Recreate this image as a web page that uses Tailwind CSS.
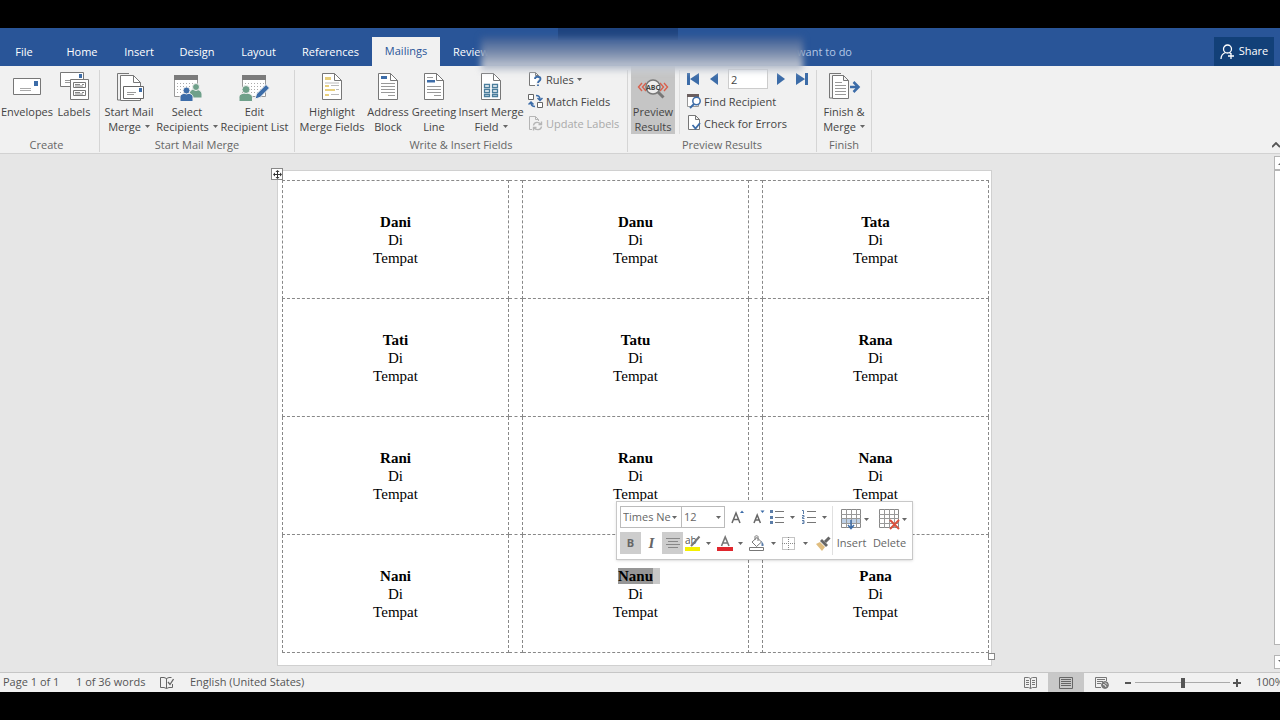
<!DOCTYPE html>
<html lang="en">
<head>
  <meta charset="UTF-8" />
  <meta name="viewport" content="width=device-width, initial-scale=1.0" />
  <title>Labels - Word</title>
  <script src="https://cdn.jsdelivr.net/npm/@tailwindcss/browser@4"></script>
</head>
<body class="bg-black font-['Open_Sans','Noto_Sans',sans-serif] text-[11px] text-[#444]">
  <!-- shared icon shapes -->
  <svg class="hidden">
    <symbol id="page" viewBox="0 0 20 27">
      <path d="M.5.5h12l7 7v19H.5z" fill="#fff" stroke="#777" />
      <path d="M12.5.5v7h7" fill="none" stroke="#777" />
    </symbol>
    <symbol id="sheet" viewBox="0 0 24 22">
      <path d="M.5.5h23v21H.5z" fill="#fff" stroke="#999" />
      <path d="M0 0h24v5H0z" fill="#7b7b7b" />
      <path d="M3 8.500h19M3 11.500h19M3 14.500h19M3 17.500h19" stroke="#aaa" stroke-dasharray="1 2" />
    </symbol>
    <symbol id="caret" viewBox="0 0 5 3"><path d="M0 0h5L2.500 3z" fill="#666" /></symbol>
  </svg>

  <div class="min-h-screen flex flex-col pt-7 pb-[29px] overflow-hidden">
    <!-- tabs -->
    <header class="relative bg-[#295598] h-[38px] flex items-end text-white whitespace-nowrap">
      <nav class="flex items-end text-center leading-[28px]">
        <a href="#" class="w-12 mr-1">File</a>
        <a href="#" class="w-[60px]">Home</a>
        <a href="#" class="w-[54px]">Insert</a>
        <a href="#" class="w-[62px]">Design</a>
        <a href="#" class="w-[61px]">Layout</a>
        <a href="#" class="w-[83px]">References</a>
        <a href="#" class="w-[68px] h-[29px] bg-[#f1f1f1] text-[#295598]">Mailings</a>
        <a href="#" class="w-[62px]">Review</a>
      </nav>
      <input type="text" value="Tell me what you want to do" aria-label="Tell me" class="w-[160px] h-[29px] ml-[190px] mr-auto text-right text-[#b4c8e6] outline-none" />
      <button class="bg-[#124078] h-[29px] w-[60px] mr-1.5 flex items-center justify-center gap-1">
        <svg class="w-[15px] h-4" viewBox="0 0 15 16" fill="none" stroke="#fff" stroke-width="1.3">
          <circle cx="7.500" cy="5" r="4" />
          <path d="M1 15c0-3 2-5.500 4.500-6.500M9.500 8.500l1.500 1.500M8 12h6M11 9v6" />
        </svg>
        Share
      </button>
      <div class="absolute left-[558px] top-0 w-[120px] h-3 bg-[#1f447f]"></div>
      <div class="absolute left-[481px] top-[9px] w-[322px] h-[34px] z-10 bg-linear-to-b from-[#3a5c95] via-[#7f90ae] to-[#d3d6dc] blur-[3px]"></div>
    </header>

    <!-- ribbon -->
    <div class="relative bg-[#f1f1f1] h-[88px] border-b border-[#d2d2d2] flex pt-1 pb-px whitespace-nowrap leading-[15px]">
      <section class="w-[100px] shrink-0 border-r border-[#d5d5d5] flex flex-col justify-between">
        <div class="flex">
          <button class="w-[54px] flex flex-col items-center">
            <svg class="w-9 h-[34px]" viewBox="0 0 36 34">
              <path d="M4.500 8.500h27v16h-27z" fill="#fff" stroke="#777" />
              <path d="M25 11h4v5h-4z" fill="#3c6ca8" />
              <path d="M11 18.500h11M11 20.500h11" stroke="#aaa" />
            </svg>
            Envelopes
          </button>
          <button class="w-10 flex flex-col items-center">
            <svg class="w-9 h-[34px]" viewBox="0 0 36 34">
              <path d="M4.500 2.500h23v14h-23z" fill="#fff" stroke="#777" />
              <path d="M23 4h3v4h-3z" fill="#3c6ca8" />
              <path d="M9 10.500h5M9 12.500h5" stroke="#999" />
              <path d="M14.500 9.500h18v20h-18z" fill="#fff" stroke="#777" />
              <path d="M17.500 12.500h12v5h-12zM17.500 20.500h12v5h-12z" fill="#fff" stroke="#777" />
              <path d="M19 14.500h5M26 14.500h2M19 16h8M19 22.500h5M26 22.500h2M19 24h8" stroke="#888" />
            </svg>
            Labels
          </button>
        </div>
        <h2 class="text-center text-[#666] pr-1.5">Create</h2>
      </section>

      <section class="w-[195px] shrink-0 border-r border-[#d5d5d5] flex flex-col justify-between">
        <div class="flex pl-[3px]">
          <button class="w-[52px] flex flex-col items-center">
            <svg class="w-9 h-[34px]" viewBox="0 0 36 34">
              <path d="M18 3.500H6.500V30H9" fill="none" stroke="#777" />
              <path d="M9.500 5.500h13l7 7v18h-20z" fill="#fff" stroke="#777" />
              <path d="M22.500 5.500v7h7" fill="none" stroke="#777" />
              <path d="M12.500 16.500h20v12h-20z" fill="#fff" stroke="#666" />
              <path d="M28 18h3v4h-3z" fill="#3c6ca8" />
              <path d="M16 22.500h9M16 24.500h7" stroke="#999" />
            </svg>
            Start Mail
            <span class="flex items-center gap-1">Merge <svg class="w-[5px] h-[3px]"><use href="#caret" /></svg></span>
          </button>
          <button class="w-16 flex flex-col items-center">
            <svg class="w-9 h-[34px]" viewBox="0 0 36 34">
              <use href="#sheet" x="5" y="5" width="24" height="22" />
              <g stroke="#f1f1f1">
                <path d="M20 28v-4c0-3 3-5 6-5s7 2 7 5v4z" fill="#6fa08a" />
                <circle cx="27" cy="17" r="3.500" fill="#6fa08a" />
                <path d="M11 31.500v-4c0-3 3-4.500 6.500-4.500s6.500 1.500 6.500 4.500v4z" fill="#3c6ca8" />
                <circle cx="17.500" cy="20.500" r="3.500" fill="#3c6ca8" />
              </g>
            </svg>
            Select
            <span class="flex items-center gap-1">Recipients <svg class="w-[5px] h-[3px]"><use href="#caret" /></svg></span>
          </button>
          <button class="w-[71px] flex flex-col items-center">
            <svg class="w-9 h-[34px]" viewBox="0 0 36 34">
              <use href="#sheet" x="5" y="5" width="24" height="22" />
              <g stroke="#f1f1f1">
                <path d="M2 31.500v-4c0-3 3-4.500 6.500-4.500s7 1.500 7 4.500v4z" fill="#6fa08a" />
                <circle cx="9" cy="19.500" r="4" fill="#6fa08a" />
                <path d="M18 29l1.500-5L29 14.500l3.500 3.500-9.500 9.500z" fill="#3c6ca8" />
              </g>
            </svg>
            Edit
            <span>Recipient List</span>
          </button>
        </div>
        <h2 class="text-center text-[#666]">Start Mail Merge</h2>
      </section>

      <section class="w-[333px] shrink-0 border-r border-[#d5d5d5] flex flex-col justify-between">
        <div class="flex pl-[3px]">
          <button class="w-[68px] flex flex-col items-center">
            <svg class="w-9 h-[34px]" viewBox="0 0 36 34">
              <use href="#page" x="8" y="3" width="20" height="27" />
              <path d="M11 7h6v3h-6zM11 15h4v2h-4zM11 19h10v2H11zM11 24h4v2h-4z" fill="#e8cf7c" />
              <path d="M17 15.500h8M22 19.500h3M17 24.500h8M11 13h14" stroke="#bbb" />
            </svg>
            Highlight
            <span>Merge Fields</span>
          </button>
          <button class="w-11 flex flex-col items-center">
            <svg class="w-9 h-[34px]" viewBox="0 0 36 34">
              <use href="#page" x="8" y="3" width="20" height="27" />
              <path d="M11 6h6v3h-6z" fill="#3c6ca8" />
              <path d="M11 13.500h14M11 16.500h14M11 19.500h14M11 22.500h14M18 25.500h7" stroke="#999" />
            </svg>
            Address
            <span>Block</span>
          </button>
          <button class="w-12 flex flex-col items-center">
            <svg class="w-9 h-[34px]" viewBox="0 0 36 34">
              <use href="#page" x="8" y="3" width="20" height="27" />
              <path d="M11 10h8v2.500h-8z" fill="#3c6ca8" />
              <path d="M11 7.500h6M11 16.500h14M11 19.500h14M11 22.500h14M18 25.500h7" stroke="#999" />
            </svg>
            Greeting
            <span>Line</span>
          </button>
          <button class="w-[66px] flex flex-col items-center">
            <svg class="w-9 h-[34px]" viewBox="0 0 36 34">
              <use href="#page" x="8" y="3" width="20" height="27" />
              <path d="M11.500 14.500h5v3h-5zM19.500 14.500h5v3h-5zM11.500 19.500h5v3h-5zM19.500 19.500h5v3h-5zM11.500 24.500h5v2h-5zM19.500 24.500h5v2h-5z" fill="#fff" stroke="#4a7d9c" stroke-width="1.300" />
            </svg>
            Insert Merge
            <span class="flex items-center gap-1">Field <svg class="w-[5px] h-[3px]"><use href="#caret" /></svg></span>
          </button>
          <div class="flex flex-col pl-1 -mt-0.5">
            <button class="h-[22px] flex items-center gap-[3px]">
              <svg class="w-[15px] h-4" viewBox="0 0 15 16">
                <path d="M7 14.500H1.500v-13h6l3 3V7M7.500 1.500v3h3" fill="#fff" stroke="#777" />
                <path d="M7 8c0-3 5.500-3 5.500 0 0 2-2.500 2-2.500 4M10 13.500V15" fill="none" stroke="#3c6ca8" stroke-width="1.800" />
              </svg>
              Rules <svg class="w-[5px] h-[3px]"><use href="#caret" /></svg>
            </button>
            <button class="h-[22px] flex items-center gap-[3px]">
              <svg class="w-[15px] h-4" viewBox="0 0 15 16">
                <path d="M.5 1.500h5v5h-5zM9.500 9.500h5v5h-5z" fill="#fff" stroke="#666" />
                <path d="M8 2.500c3 0 4 1.500 4 4M9.500 5L12 7.500 14.500 5M7 13.500c-3 0-4-1.500-4-4M.5 11.500L3 9l2.500 2.500" fill="none" stroke="#3c6ca8" stroke-width="1.500" />
              </svg>
              Match Fields
            </button>
            <button class="h-[22px] flex items-center gap-[3px] text-[#aaa]">
              <svg class="w-[15px] h-4" viewBox="0 0 15 16" fill="none" stroke="#b5b5b5">
                <path d="M4 14.500H1.500v-13h6l3 3V6M7.500 1.500v3h3" />
                <path d="M5.500 10.500c.5-4 6-4 7.500-1M13.500 6.500v3h-3M13.500 11.500c-.5 4-6 4-7.500 1M5.500 15.500v-3h3" stroke-width="1.400" />
              </svg>
              Update Labels
            </button>
          </div>
        </div>
        <h2 class="text-center text-[#666]">Write &amp; Insert Fields</h2>
      </section>

      <section class="w-[189px] shrink-0 border-r border-[#d5d5d5] flex flex-col justify-between">
        <div class="flex pl-[3px]">
          <button class="w-11 h-[68px] -mt-1 pt-1 bg-[#c5c5c5] flex flex-col items-center">
            <svg class="w-9 h-[34px]" viewBox="0 0 36 34">
              <path d="M7 13l-3.500 4L7 21M11 13l-3.500 4 3.500 4M25 13l3.500 4-3.500 4M29 13l3.500 4-3.500 4" fill="none" stroke="#d9604c" stroke-width="1.400" />
              <path d="M22.500 21.500l6 6" stroke="#777" stroke-width="3" />
              <circle cx="18" cy="17" r="7" fill="#eee" stroke="#777" stroke-width="1.500" />
              <text x="18" y="20" text-anchor="middle" font-size="7" font-weight="700" fill="#444">ABC</text>
            </svg>
            Preview
            <span>Results</span>
          </button>
          <div class="w-px bg-[#dedede] ml-1 mr-[6px]"></div>
          <div class="flex flex-col -mt-0.5">
            <div class="h-[22px] flex items-center text-[#3c6ca8]">
              <button aria-label="First"><svg class="w-[14px] h-3" viewBox="0 0 14 12" fill="currentColor"><path d="M1 0h3v12H1zM13 0v12L4 6z" /></svg></button>
              <button aria-label="Previous" class="ml-2.5"><svg class="w-2 h-3" viewBox="0 0 8 12" fill="currentColor"><path d="M8 0v12L0 6z" /></svg></button>
              <input type="text" value="2" aria-label="Record" class="w-10 h-5 ml-[10px] px-0.5 bg-white border border-[#ccc] text-[#444] outline-none" />
              <button aria-label="Next" class="ml-[9px]"><svg class="w-2 h-3" viewBox="0 0 8 12" fill="currentColor"><path d="M0 0v12l8-6z" /></svg></button>
              <button aria-label="Last" class="ml-[10px]"><svg class="w-[14px] h-3" viewBox="0 0 14 12" fill="currentColor"><path d="M1 0v12l9-6zM10 0h3v12h-3z" /></svg></button>
            </div>
            <button class="h-[22px] flex items-center gap-0.5">
              <svg class="w-4 h-4" viewBox="0 0 16 16">
                <path d="M1.500 1.500h11v12h-11z" fill="#fff" stroke="#999" />
                <path d="M1 1h12v3H1z" fill="#6b5f5f" />
                <circle cx="10.500" cy="8" r="3.700" fill="#fff" stroke="#3c6ca8" stroke-width="1.500" />
                <path d="M8 11l-4 4" stroke="#3c6ca8" stroke-width="2" />
              </svg>
              Find Recipient
            </button>
            <button class="h-[22px] flex items-center gap-0.5">
              <svg class="w-4 h-4" viewBox="0 0 16 16" fill="none">
                <path d="M2.500.5h7l4 4v10h-11zM9.500.5v4h4" fill="#fff" stroke="#777" />
                <path d="M6.500 10l3 3.500L14 8" stroke="#3c6ca8" stroke-width="1.800" />
              </svg>
              Check for Errors
            </button>
          </div>
        </div>
        <h2 class="text-center text-[#666]">Preview Results</h2>
      </section>

      <section class="w-[55px] shrink-0 border-r border-[#d5d5d5] flex flex-col justify-between">
        <button class="flex flex-col items-center">
          <svg class="w-9 h-[34px]" viewBox="0 0 36 34">
            <path d="M15 3.500H3.500V28H6" fill="none" stroke="#777" />
            <path d="M6.500 5.500h11l5 5v18h-16zM17.500 5.500v5h5" fill="#fff" stroke="#777" />
            <path d="M9 12.500h7M9 15.500h11M9 18.500h11M9 21.500h11M9 24.500h11" stroke="#999" />
            <path d="M24 17h8M27.500 12l5 5-5 5" fill="none" stroke="#3c6ca8" stroke-width="2.500" />
          </svg>
          Finish &amp;
          <span class="flex items-center gap-1">Merge <svg class="w-[5px] h-[3px]"><use href="#caret" /></svg></span>
        </button>
        <h2 class="text-center text-[#666]">Finish</h2>
      </section>

      <button aria-label="Collapse ribbon" class="ml-auto self-end pb-1">
        <svg class="w-2 h-[6px]" viewBox="0 0 8 6"><path d="M0 5l4-4 4 4" fill="none" stroke="#555" stroke-width="1.800" /></svg>
      </button>
    </div>

    <!-- document -->
    <main class="flex-1 flex bg-[#e6e6e6]">
      <div class="flex-1 pt-4 pb-[6px] pr-[5px]">
        <div class="relative w-[715px] mx-auto bg-white border border-[#d0d0d0] pt-[9px] pb-3 pl-1">
          <table class="w-[706px] table-fixed border-collapse font-['Liberation_Serif',serif] text-[15px] leading-[18px] text-black text-center">
            <colgroup>
              <col class="w-[226px]" /><col class="w-[14px]" /><col class="w-[226px]" /><col class="w-[14px]" /><col class="w-[226px]" />
            </colgroup>
            <tbody id="labels"></tbody>
          </table>

          <button aria-label="Move table" class="absolute -left-[7px] -top-[3px] w-3 h-3 bg-white border border-[#888] flex items-center justify-center">
            <svg class="w-[9px] h-[9px]" viewBox="0 0 9 9"><path d="M4.500 1v7M1 4.500h7" stroke="#333" /><path d="M4.500 0l2 2h-4zM4.500 9l2-2h-4zM0 4.500l2-2v4zM9 4.500l-2-2v4z" fill="#333" /></svg>
          </button>
          <div class="absolute -right-1 bottom-[5px] w-[7px] h-[7px] bg-white border border-[#888]"></div>

          <!-- mini toolbar -->
          <div class="absolute left-[338px] top-[330px] w-[297px] h-[59px] bg-white border border-[#c8c8c8] shadow flex px-[3px] py-1 text-[#666]">
            <div class="w-[212px] flex flex-col gap-1">
              <div class="flex items-center h-[22px]">
                <div class="relative flex">
                  <select aria-label="Font" class="appearance-none w-[62px] h-[22px] border border-[#bbb] pl-0.5 pr-2.5 outline-none"><option>Times Ne</option></select>
                  <svg class="absolute right-[5px] top-[10px] w-[5px] h-[3px]"><use href="#caret" /></svg>
                </div>
                <div class="relative flex -ml-px">
                  <select aria-label="Font size" class="appearance-none w-11 h-[22px] border border-[#bbb] pl-0.5 pr-3 outline-none"><option>12</option></select>
                  <svg class="absolute right-1 top-[10px] w-[5px] h-[3px]"><use href="#caret" /></svg>
                </div>
                <button aria-label="Grow font" class="ml-1.5"><svg class="w-[14px] h-4" viewBox="0 0 14 16"><path d="M1 14L5 4l4 10M2.500 10.500h5" fill="none" stroke="#666" stroke-width="1.500" /><path d="M9 4l2-2.500L13 4z" fill="#3c6ca8" /></svg></button>
                <button aria-label="Shrink font" class="ml-2"><svg class="w-3 h-4" viewBox="0 0 12 16"><path d="M1 14l3.200-8 3.200 8M2.500 11h4" fill="none" stroke="#666" stroke-width="1.500" /><path d="M7.500 1.500h4l-2 2.500z" fill="#3c6ca8" /></svg></button>
                <button aria-label="Bullets" class="ml-[5px] flex items-center gap-[6px]">
                  <svg class="w-[14px] h-4" viewBox="0 0 14 16"><path d="M5 2.500h9M5 8.500h9M5 13.500h9" stroke="#777" /><path d="M0 1h3v3H0zM0 7h3v3H0zM0 12h3v3H0z" fill="#5b7da8" /></svg>
                  <svg class="w-[5px] h-[3px]"><use href="#caret" /></svg>
                </button>
                <button aria-label="Numbering" class="ml-[7px] flex items-center gap-[6px]">
                  <svg class="w-[14px] h-4" viewBox="0 0 14 16"><path d="M5 2.500h9M5 8.500h9M5 13.500h9" stroke="#777" /><path d="M0 1.500h1.500V5M0 6.500h2v1.500H.5v1.500h2M0 11.500h2v1.500H.5M2 13v1.500H0" fill="none" stroke="#5b7da8" /></svg>
                  <svg class="w-[5px] h-[3px]"><use href="#caret" /></svg>
                </button>
              </div>
              <div class="flex items-center h-[22px]">
                <button class="w-[21px] h-[22px] bg-[#cdcdcd] font-bold">B</button>
                <button class="w-[21px] h-[22px] font-['Liberation_Serif',serif] italic font-bold text-[15px]">I</button>
                <button aria-label="Center" class="w-[21px] h-[22px] bg-[#cdcdcd] flex items-center justify-center">
                  <svg class="w-[14px] h-3" viewBox="0 0 14 12"><path d="M0 1.500h14M2 4.500h10M0 7.500h14M2 10.500h10" stroke="#888" /></svg>
                </button>
                <button aria-label="Highlight" class="ml-0.5 flex items-center gap-[5px]">
                  <svg class="w-4 h-4 overflow-visible" viewBox="0 0 16 16"><text x="0" y="9" font-size="10" fill="#555">ab</text><path d="M14.500 1.500L8 9l-2 2" fill="none" stroke="#777" stroke-width="2" /><path d="M0 12h15v4H0z" fill="#f5f000" /></svg>
                  <svg class="w-[5px] h-[3px]"><use href="#caret" /></svg>
                </button>
                <button aria-label="Font color" class="ml-[6px] flex items-center gap-[5px]">
                  <svg class="w-4 h-4" viewBox="0 0 16 16"><path d="M4.500 11L8.200 2 12 11M5.800 8h5" fill="none" stroke="#777" stroke-width="1.600" /><path d="M0 12h16v4H0z" fill="#e0262d" /></svg>
                  <svg class="w-[5px] h-[3px]"><use href="#caret" /></svg>
                </button>
                <button aria-label="Shading" class="ml-[6px] flex items-center gap-[6px]">
                  <svg class="w-4 h-4" viewBox="0 0 16 16" fill="none" stroke="#777"><path d="M3 7l5-4.500L12.500 7l-5 4.500zM6 5V1.500c0-1 3-1 3 0V6" /><path d="M12.500 6l2 3v2h-2z" fill="#5b7da8" stroke="none" /><path d="M.5 12.500h14v3H.5z" fill="#fff" /></svg>
                  <svg class="w-[5px] h-[3px]"><use href="#caret" /></svg>
                </button>
                <button aria-label="Borders" class="ml-[6px] flex items-center gap-[8px]">
                  <svg class="w-[13px] h-[13px]" viewBox="0 0 13 13"><path d="M.5.5h12v12H.5zM6.500 0v13M0 6.500h13" fill="none" stroke="#888" stroke-dasharray="1 1" /></svg>
                  <svg class="w-[5px] h-[3px]"><use href="#caret" /></svg>
                </button>
                <button aria-label="Format painter" class="ml-2"><svg class="w-[15px] h-[15px]" viewBox="0 0 15 15"><path d="M0 8l4-2 5 5-3 4z" fill="#e0bd7f" /><path d="M4 5l2-2 6 6-2 2z" fill="#666" /><path d="M9 6l4.500-4.500" stroke="#666" stroke-width="3" /></svg></button>
              </div>
            </div>
            <div class="flex border-l border-[#e0e0e0] ml-px text-center">
              <button class="w-[37px] flex flex-col items-center gap-0.5">
                <span class="flex items-center gap-0.5 pl-1.5">
                  <svg class="w-[22px] h-[26px]" viewBox="0 0 22 26"><path d="M1.500 3.500h19v18h-19z" fill="#fff" stroke="#888" /><path d="M2 13h18v4H2z" fill="#bdd0e6" /><path d="M1 8.500h20M1 12.500h20M1 17.500h20M6.500 3v19M11.500 3v19M16.500 3v19" stroke="#999" /><path d="M11 14v7M8 19l3 3.500 3-3.500" fill="none" stroke="#3c6ca8" stroke-width="1.500" /></svg>
                  <svg class="w-[5px] h-[3px]"><use href="#caret" /></svg>
                </span>
                <span class="leading-[18px]">Insert</span>
              </button>
              <button class="w-[39px] flex flex-col items-center gap-0.5">
                <span class="flex items-center gap-0.5 pl-1.5">
                  <svg class="w-[22px] h-[26px]" viewBox="0 0 22 26"><path d="M1.500 3.500h19v18h-19z" fill="#fff" stroke="#888" /><path d="M1 8.500h20M1 12.500h20M1 17.500h20M6.500 3v19M11.500 3v19M16.500 3v19" stroke="#999" /><path d="M12 14l9 9M21 14l-9 9" stroke="#d9503c" stroke-width="2" /></svg>
                  <svg class="w-[5px] h-[3px]"><use href="#caret" /></svg>
                </span>
                <span class="leading-[18px]">Delete</span>
              </button>
            </div>
          </div>
        </div>
      </div>
      <div class="w-1.5 pt-0.5 pb-[3px] flex flex-col overflow-hidden">
        <button aria-label="Scroll up" class="w-4 h-[14px] bg-white border border-[#b5b5b5] flex items-center justify-center"><svg class="w-2 h-1" viewBox="0 0 8 4"><path d="M4 0l4 4H0z" fill="#666" /></svg></button>
        <div class="w-4 flex-1 mb-[10px] bg-white border border-[#b5b5b5]"></div>
        <button aria-label="Scroll down" class="w-4 h-[14px] bg-white border border-[#b5b5b5] flex items-center justify-center"><svg class="w-2 h-1" viewBox="0 0 8 4"><path d="M4 4l4-4H0z" fill="#666" /></svg></button>
      </div>
    </main>

    <!-- status bar -->
    <footer class="bg-[#f1f1f1] border-t border-[#c6c6c6] h-5 flex items-center whitespace-nowrap overflow-hidden text-[#555]">
      <span class="w-[76px] pl-[3px]">Page 1 of 1</span>
      <span class="w-[84px]">1 of 36 words</span>
      <svg class="w-[14px] h-3 mr-4" viewBox="0 0 14 12" fill="none" stroke="#666"><path d="M9 .5L6.500 1.500 4 .5H.5v10H4l2.500 1 2.500-1M6.500 1.500v10M9 .5h2.500M12.500 7v3.500H9" /><path d="M8 5l2 2.500L13.500 2" stroke-width="1.300" /></svg>
      <span>English (United States)</span>
      <div class="ml-auto flex items-center h-full">
        <button aria-label="Read mode" class="w-9 flex justify-center"><svg class="w-[13px] h-3" viewBox="0 0 13 12" fill="none" stroke="#777"><path d="M6.500 1.500L4.500.5h-4v10h4l2 1 2-1h4V.5h-4zM6.500 1.500v10M2 3.500h3M2 5.500h3M2 7.500h3M8 3.500h3M8 5.500h3M8 7.500h3" /></svg></button>
        <button aria-label="Print layout" class="w-9 h-full bg-[#c8c8c8] flex items-center justify-center"><svg class="w-[14px] h-3" viewBox="0 0 14 12" fill="none" stroke="#666"><path d="M.5.5h13v11H.5zM2 2.500h10M2 4.500h10M2 6.500h10M2 8.500h10" /></svg></button>
        <button aria-label="Web layout" class="w-9 flex justify-center"><svg class="w-[14px] h-3" viewBox="0 0 14 12" fill="none" stroke="#777"><path d="M6 10.500H.5V.5h11V4M2 2.500h8M2 4.500h6M2 6.500h4" /><circle cx="10" cy="8" r="3.400" fill="#777" /><path d="M8 7.500l2 .5 1 2M10 5.500l2 2" stroke="#f1f1f1" /></svg></button>
        <button aria-label="Zoom out" class="ml-1 w-2 flex justify-center"><svg class="w-[6px] h-2" viewBox="0 0 6 8"><path d="M0 4h6" stroke="#555" stroke-width="2" /></svg></button>
        <input type="range" min="0" max="100" value="50" aria-label="Zoom" class="appearance-none w-[95px] h-px mx-[3px] bg-[#aaa] [&::-webkit-slider-thumb]:appearance-none [&::-webkit-slider-thumb]:w-1 [&::-webkit-slider-thumb]:h-[10px] [&::-webkit-slider-thumb]:bg-[#555]" />
        <button aria-label="Zoom in" class="w-2 flex justify-center"><svg class="w-2 h-2" viewBox="0 0 8 8"><path d="M0 4h8M4 0v8" stroke="#555" stroke-width="2" /></svg></button>
        <span class="w-[39px] pl-[15px]">100%</span>
      </div>
    </footer>
  </div>

  <script>
    const rows = [
      ['Dani', 'Danu', 'Tata'],
      ['Tati', 'Tatu', 'Rana'],
      ['Rani', 'Ranu', 'Nana'],
      ['Nani', 'Nanu', 'Pana'],
    ];
    const selected = 'Nanu';
    const cell = name => {
      const label = name === selected
        ? `<span class="relative bg-[#969696]">${name}<span class="absolute left-full top-0 w-[7px] h-full bg-[#c8c8c8]"></span></span>`
        : name;
      return `<td class="border border-dashed border-[#888] h-[118px] align-middle"><b>${label}</b><br>Di<br>Tempat</td>`;
    };
    const gap = '<td class="border border-dashed border-[#888]"></td>';
    document.getElementById('labels').innerHTML = rows.map(r => `<tr>${r.map(cell).join(gap)}</tr>`).join('');
  </script>
</body>
</html>
